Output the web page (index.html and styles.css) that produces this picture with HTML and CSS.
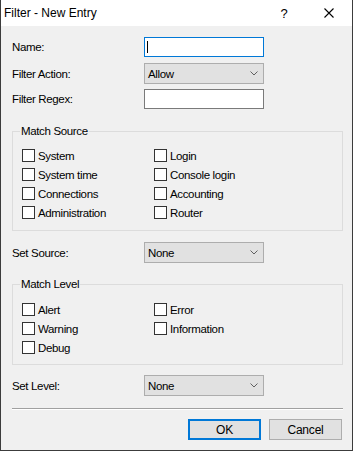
FILE: index.html
```html
<!DOCTYPE html>
<html lang="en">
<head>
    <meta charset="UTF-8">
    <title>Filter - New Entry</title>
    <link rel="stylesheet" href="styles.css">
</head>
<body>

<div class="window">
    <div class="titlebar">
        <span class="title">Filter - New Entry</span>
        <span class="help">?</span>
        <span class="close">
            <svg width="10" height="10" viewBox="0 0 10 10"><path d="M0.5 0.5 L9.5 9.5 M9.5 0.5 L0.5 9.5" stroke="#000" stroke-width="1.1" fill="none"/></svg>
        </span>
    </div>

    <div class="content">
        <div class="field">
            <label>Name:</label>
            <div class="textbox focused"><span class="caret"></span></div>
        </div>
        <div class="field field-combo">
            <label>Filter Action:</label>
            <div class="combo">
                <span>Allow</span>
                <svg width="8" height="5" viewBox="0 0 8 5"><path d="M0.5 0.5 L4 4 L7.5 0.5" stroke="#606060" fill="none"/></svg>
            </div>
        </div>
        <div class="field field-regex">
            <label>Filter Regex:</label>
            <div class="textbox"></div>
        </div>

        <fieldset class="group group-source">
            <legend>Match Source</legend>
            <div class="checks">
                <div class="check"><span class="box"></span>System</div>
                <div class="check"><span class="box"></span>Login</div>
                <div class="check"><span class="box"></span>System time</div>
                <div class="check"><span class="box"></span>Console login</div>
                <div class="check"><span class="box"></span>Connections</div>
                <div class="check"><span class="box"></span>Accounting</div>
                <div class="check"><span class="box"></span>Administration</div>
                <div class="check"><span class="box"></span>Router</div>
            </div>
        </fieldset>

        <div class="field field-set">
            <label>Set Source:</label>
            <div class="combo">
                <span>None</span>
                <svg width="8" height="5" viewBox="0 0 8 5"><path d="M0.5 0.5 L4 4 L7.5 0.5" stroke="#606060" fill="none"/></svg>
            </div>
        </div>

        <fieldset class="group group-level">
            <legend>Match Level</legend>
            <div class="checks">
                <div class="check"><span class="box"></span>Alert</div>
                <div class="check"><span class="box"></span>Error</div>
                <div class="check"><span class="box"></span>Warning</div>
                <div class="check"><span class="box"></span>Information</div>
                <div class="check"><span class="box"></span>Debug</div>
            </div>
        </fieldset>

        <div class="field field-level">
            <label>Set Level:</label>
            <div class="combo">
                <span>None</span>
                <svg width="8" height="5" viewBox="0 0 8 5"><path d="M0.5 0.5 L4 4 L7.5 0.5" stroke="#606060" fill="none"/></svg>
            </div>
        </div>

        <div class="separator"></div>

        <div class="buttons">
            <button class="default">OK</button>
            <button>Cancel</button>
        </div>
    </div>
</div>

</body>
</html>
```

FILE: styles.css
```css
html, body {
    margin: 0;
    padding: 0;
}

body {
    font-family: "Liberation Sans", Arial, sans-serif;
    font-size: 11.5px;
    letter-spacing: -0.35px;
    color: #000;
    background: #f0f0f0;
}

.window {
    width: 353px;
    height: 451px;
    box-sizing: border-box;
    border: 1px solid #3c3c3c;
    border-top: none;
    background: #f0f0f0;
    overflow: hidden;
}

.titlebar {
    height: 26px;
    background: #fff;
    display: flex;
    align-items: center;
    padding-left: 3px;
}

.title {
    flex: 1;
    font-size: 12px;
    letter-spacing: 0;
}

.help {
    width: 20px;
    text-align: center;
    margin-right: 12px;
    font-size: 13px;
}

.close {
    width: 46px;
    height: 26px;
    display: flex;
    align-items: center;
    justify-content: center;
}

.content {
    padding: 11px 9px 0 11px;
}

.field {
    display: grid;
    grid-template-columns: 132px 120px;
    align-items: center;
}

.field-combo {
    margin-top: 6px;
}

.field-regex {
    margin-top: 5px;
}

.field-set {
    margin-top: 11px;
}

.field-level {
    margin-top: 10px;
}

.textbox {
    height: 20px;
    box-sizing: border-box;
    border: 1px solid #7a7a7a;
    background: #fff;
    display: flex;
    align-items: center;
    padding-left: 2px;
}

.textbox.focused {
    border-color: #0078d7;
}

.caret {
    width: 1px;
    height: 12px;
    background: #000;
}

.combo {
    height: 21px;
    box-sizing: border-box;
    border: 1px solid #adadad;
    background: #e1e1e1;
    display: flex;
    align-items: center;
    justify-content: space-between;
    padding: 0 5px 0 3px;
}

.group {
    margin: 15px 0 0 0;
    padding: 7px 0 8px 7px;
    border: 1px solid #dcdcdc;
    min-width: 0;
}

.group-level {
    margin-top: 14px;
    padding-top: 8px;
    padding-bottom: 7px;
}

.group legend {
    padding: 0 1px;
    line-height: 15px;
}

.checks {
    display: grid;
    grid-template-columns: 132px auto;
    margin-left: 2px;
}

.check {
    height: 19px;
    display: flex;
    align-items: center;
}

.box {
    width: 13px;
    height: 13px;
    box-sizing: border-box;
    border: 1px solid #333;
    background: #fff;
    margin-right: 3px;
}

.separator {
    margin-top: 12px;
    height: 1px;
    background: #a0a0a0;
    border-bottom: 1px solid #fff;
}

.buttons {
    display: flex;
    justify-content: flex-end;
    gap: 8px;
    margin-top: 9px;
    padding-right: 1px;
}

button {
    width: 73px;
    height: 21px;
    box-sizing: border-box;
    border: 1px solid #adadad;
    background: #e1e1e1;
    font-family: inherit;
    font-size: 12px;
    letter-spacing: -0.2px;
    color: #000;
    padding: 0;
}

button.default {
    border: 2px solid #0078d7;
}
```
